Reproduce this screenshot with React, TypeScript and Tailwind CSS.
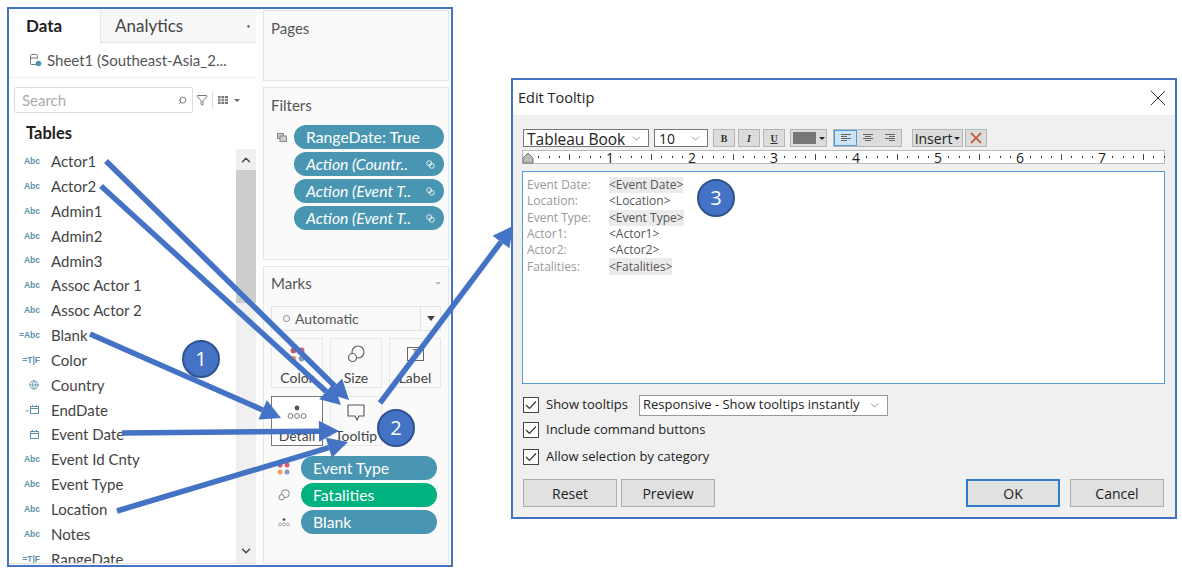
import { ChevronDown, ChevronUp, Globe, Search, Funnel } from "lucide-react";

const fields = [
  ["abc", "Actor1"],
  ["abc", "Actor2"],
  ["abc", "Admin1"],
  ["abc", "Admin2"],
  ["abc", "Admin3"],
  ["abc", "Assoc Actor 1"],
  ["abc", "Assoc Actor 2"],
  ["=abc", "Blank"],
  ["tf", "Color"],
  ["globe", "Country"],
  ["=date", "EndDate"],
  ["date", "Event Date"],
  ["abc", "Event Id Cnty"],
  ["abc", "Event Type"],
  ["abc", "Location"],
  ["abc", "Notes"],
  ["tf", "RangeDate"],
];

const tooltipLines = [
  ["Event Date:", "<Event Date>", true],
  ["Location:", "<Location>", false],
  ["Event Type:", "<Event Type>", true],
  ["Actor1:", "<Actor1>", false],
  ["Actor2:", "<Actor2>", false],
  ["Fatalities:", "<Fatalities>", true],
] as const;

const CalendarIcon = () => (
  <svg width="11" height="11" viewBox="0 0 11 11" fill="none" stroke="#5b93ab" strokeWidth="1">
    <rect x="1.5" y="2.5" width="8" height="7" />
    <path d="M1.5 4.5h8M3.5 1v2M7.5 1v2" />
  </svg>
);

const FieldIcon = ({ kind }: { kind: string }) => {
  if (kind === "globe") return <Globe size={10} color="#5b93ab" className="mr-[1px]" />;
  if (kind === "date") return <CalendarIcon />;
  if (kind === "=date")
    return (
      <span className="flex items-center text-[7px] text-[#5b93ab]">
        =<CalendarIcon />
      </span>
    );
  const text = kind === "abc" ? "Abc" : kind === "=abc" ? "=Abc" : "=T|F";
  return <span className="font-['Liberation_Sans',sans-serif] text-[8.5px] font-bold text-[#5b93ab]">{text}</span>;
};

const LinkIcon = () => (
  <svg width="9" height="9" viewBox="0 0 10 10" fill="none" stroke="#fff" strokeWidth="0.9" className="shrink-0">
    <circle cx="3.6" cy="3.6" r="2.8" />
    <circle cx="6.4" cy="6.4" r="2.8" />
  </svg>
);

const Pill = ({ label, italic, color = "bg-[#4996b2]", link }: { label: string; italic?: boolean; color?: string; link?: boolean }) => (
  <div className={`flex h-6 items-center justify-between rounded-full pl-3 pr-[9px] text-[15.75px] text-white ${color} ${italic ? "italic" : ""}`}>
    <span className="whitespace-nowrap">{label}</span>
    {link && <LinkIcon />}
  </div>
);

const DetailIcon = ({ small }: { small?: boolean }) => (
  <svg width={small ? 12 : 20} height={small ? 12 : 18} viewBox="0 0 20 18" fill="none" stroke="#777" strokeWidth="1">
    <circle cx="10" cy="5" r="2.4" fill="#555" stroke="none" />
    <circle cx="3.5" cy="13" r="2.4" />
    <circle cx="10" cy="13" r="2.4" />
    <circle cx="16.5" cy="13" r="2.4" />
  </svg>
);

const SizeIcon = ({ small }: { small?: boolean }) => (
  <svg width={small ? 12 : 18} height={small ? 14 : 18} viewBox="0 0 18 18" fill="none" stroke="#666" strokeWidth="1.2">
    <circle cx="11" cy="7" r="6" />
    <circle cx="5.5" cy="12.5" r="4" fill="#fafafa" />
  </svg>
);

const ColorDots = ({ s = 5 }: { s?: number }) => (
  <svg width={s * 2 + 3} height={s * 2 + 3} viewBox="0 0 13 13">
    <circle cx="3" cy="3" r="2.5" fill="#c9566f" />
    <circle cx="10" cy="3" r="2.5" fill="#e2576f" />
    <circle cx="3" cy="10" r="2.5" fill="#f0a060" />
    <circle cx="10" cy="10" r="2.5" fill="#8a9cb8" />
  </svg>
);

const MarkButton = ({ label, icon, active }: { label: string; icon: React.ReactNode; active?: boolean }) => (
  <div className={`flex h-[50px] flex-col items-center justify-between border pt-[5px] text-[14px] text-[#444] ${active ? "border-[#777] bg-white" : "border-[#e8e8e8] bg-[#fafafa]"}`}>
    <div className="flex h-5 items-center">{icon}</div>
    <span className="leading-[19px]">{label}</span>
  </div>
);

const Card = ({ title, caret, className, children }: { title: string; caret?: boolean; className: string; children?: React.ReactNode }) => (
  <div className={`border border-[#e6e6e6] bg-[#fafafa] px-[7px] ${className}`}>
    <div className="flex items-center justify-between text-[15px] leading-5 text-[#555]">
      {title}
      {caret && <div className="h-0 w-0 border-x-[3px] border-t-[3px] border-x-transparent border-t-[#bbb]" />}
    </div>
    {children}
  </div>
);

const Ruler = () => {
  const ticks = [];
  for (let i = 1; i < 63; i++) {
    const x = Math.round(6 + i * 10.25);
    if (i % 8 === 0) continue;
    if (i % 4 === 0) ticks.push(<rect key={i} x={x} y="4" width="1" height="6" fill="#444" />);
    else ticks.push(<rect key={i} x={x} y="6" width="1" height="2" fill="#333" />);
  }
  return (
    <svg width="643" height="14" className="block bg-white">
      <rect x="0.5" y="0.5" width="642" height="13" fill="none" stroke="#bbb" />
      {ticks}
      {[1, 2, 3, 4, 5, 6, 7].map((n) => (
        <text key={n} x={6 + n * 82} y="12.5" textAnchor="middle" fontSize="14" fill="#222" fontFamily="Open Sans, sans-serif">
          {n}
        </text>
      ))}
      <path d="M1 13V8l5-5 5 5v5z" fill="#bbb" stroke="#777" />
    </svg>
  );
};

const ToolButton = ({ children, className = "" }: { children: React.ReactNode; className?: string }) => (
  <div className={`flex h-[18px] w-[22px] items-center justify-center border border-[#b5b5b5] bg-[#dcdcdc] ${className}`}>{children}</div>
);

const AlignIcon = ({ mode }: { mode: "l" | "c" | "r" }) => {
  const x = (w: number) => (mode === "l" ? 1 : mode === "c" ? (12 - w) / 2 : 11 - w);
  return (
    <svg width="12" height="10" viewBox="0 0 12 10" stroke="#666">
      <path d={`M${x(10)} 1.5h10M${x(6)} 3.5h6M${x(10)} 5.5h10M${x(6)} 7.5h6`} />
    </svg>
  );
};

const Check = ({ label, className = "" }: { label: string; className?: string }) => (
  <div className={`flex items-center ${className}`}>
    <div className="flex h-4 w-4 items-center justify-center border border-[#444] bg-white">
      <svg width="12" height="10" viewBox="0 0 12 10" fill="none" stroke="#333" strokeWidth="1.2">
        <path d="M1 5l3.5 3.5L11 1.5" />
      </svg>
    </div>
    <span className="ml-[7px] whitespace-nowrap text-[13px] text-[#222]">{label}</span>
  </div>
);

const DialogButton = ({ label, ok }: { label: string; ok?: boolean }) => (
  <div className={`flex h-7 w-[94px] items-center justify-center bg-[#e1e1e1] text-[14px] text-[#222] ${ok ? "border-2 border-[#2d7cc7]" : "border border-[#adadad]"}`}>{label}</div>
);

const Badge = ({ n, x, y }: { n: number; x: string; y: string }) => (
  <div className={`absolute flex h-[38px] w-[38px] items-center justify-center rounded-full border-2 border-[#2f528f] bg-[#4472c4] font-['Open_Sans',sans-serif] text-[20px] text-white ${x} ${y}`}>{n}</div>
);

const Arrow = ({ d }: { d: [number, number, number, number] }) => {
  const [x1, y1, x2, y2] = d;
  const a = Math.atan2(y2 - y1, x2 - x1);
  const bx = x2 - 20 * Math.cos(a);
  const by = y2 - 20 * Math.sin(a);
  const nx = 10.5 * Math.sin(a);
  const ny = 10.5 * Math.cos(a);
  return (
    <g>
      <line x1={x1} y1={y1} x2={bx} y2={by} stroke="#4472c4" strokeWidth="5.5" />
      <polygon points={`${x2},${y2} ${bx + nx},${by - ny} ${bx - nx},${by + ny}`} fill="#4472c4" />
    </g>
  );
};

export default function App() {
  return (
    <div className="relative flex h-[569px] w-[1182px] items-start overflow-hidden bg-white font-['Lato',sans-serif]">
      {/* Tableau side panes */}
      <div className="ml-[7px] mt-[7px] flex h-[560px] w-[446px] gap-[7px] border-2 border-[#4472c4] bg-[#fdfdfd] pb-[1px] pt-px">
        {/* Data pane */}
        <div className="flex w-[247px] shrink-0 flex-col overflow-hidden bg-white">
          <div className="flex h-[33px] shrink-0">
            <div className="flex w-[91px] items-center pb-[2px] pl-[17px] text-[17px] font-bold text-[#222]">Data</div>
            <div className="flex flex-1 items-center justify-between border-b border-l border-[#e6e6e6] bg-[#f7f7f7] pl-[14px] pr-[6px] text-[17px] text-[#444]">
              Analytics
              <span className="text-[5px] leading-none text-[#555]">●</span>
            </div>
          </div>
          <div className="flex h-[35px] shrink-0 items-center gap-[5px] border-b border-[#eee] pl-5 text-[15px] text-[#555]">
            <svg width="13" height="14" viewBox="0 0 13 14" fill="none" stroke="#777">
              <path d="M7 11.5H2.5a1 1 0 0 1-1-1v-8a1 1 0 0 1 1-1h5a1 1 0 0 1 1 1v3M1.5 5h7" />
              <circle cx="9.5" cy="10.5" r="2.8" fill="#4996b2" stroke="none" />
            </svg>
            Sheet1 (Southeast-Asia_2...
          </div>
          <div className="mt-[9px] flex h-[26px] shrink-0 items-center pl-[5px]">
            <div className="flex h-[26px] w-[179px] items-center justify-between rounded-[2px] border border-[#ddd] pl-[7px] pr-[5px] text-[15px] text-[#aaa]">
              Search
              <Search size={9} color="#555" className="-scale-x-100" />
            </div>
            <Funnel size={12} color="#777" className="ml-[3px]" />
            <div className="ml-[4px] h-[18px] w-px bg-[#ddd]" />
            <svg width="10" height="8" viewBox="0 0 10 8" fill="#777" className="ml-[5px]">
              <path d="M0 0h10v8H0z" />
              <path d="M3 0v8M6.5 0v8M0 2.7h10M0 5.3h10" stroke="#fff" strokeWidth="0.8" />
            </svg>
            <div className="ml-[6px] h-0 w-0 border-x-[3px] border-t-[3px] border-x-transparent border-t-[#666]" />
          </div>
          <div className="mt-[10px] h-[26px] shrink-0 pl-[17px] text-[16.5px] font-bold leading-[20px] text-[#222]">Tables</div>
          <div className="flex min-h-0 flex-1 border-b border-[#ddd]">
            <div className="min-w-0 flex-1 overflow-hidden">
              {fields.map(([kind, name]) => (
                <div key={name} className="flex h-[24.85px] items-center text-[15px] text-[#444]">
                  <div className="mr-[11px] flex w-[31px] shrink-0 justify-end">
                    <FieldIcon kind={kind} />
                  </div>
                  {name}
                </div>
              ))}
            </div>
            <div className="flex w-5 shrink-0 flex-col bg-[#f0f0f0]">
              <div className="flex h-[21px] items-center justify-center">
                <ChevronUp size={14} strokeWidth={2.5} color="#444" />
              </div>
              <div className="h-[133px] bg-[#cdcdcd]" />
              <div className="mt-auto flex h-[24px] items-center justify-center">
                <ChevronDown size={14} strokeWidth={2.5} color="#444" />
              </div>
            </div>
          </div>
        </div>

        {/* Cards column */}
        <div className="flex w-[186px] shrink-0 flex-col gap-[6px]">
          <Card title="Pages" className="h-[71px] pt-[7px]" />
          <Card title="Filters" className="h-[173px] pt-[7px]">
            <div className="relative -mr-[3px] mt-[10px] flex flex-col gap-[3px] pl-[23px]">
              <svg width="10" height="9" viewBox="0 0 10 9" fill="#ccc" stroke="#888" className="absolute left-[6px] top-[8px]">
                <rect x="0.5" y="0.5" width="6" height="5" />
                <rect x="3" y="3" width="6.5" height="5.5" />
              </svg>
              <Pill label="RangeDate: True" />
              <Pill label="Action (Countr.." italic link />
              <Pill label="Action (Event T.." italic link />
              <Pill label="Action (Event T.." italic link />
            </div>
          </Card>
          <Card title="Marks" caret className="min-h-0 flex-1 pt-[6px]">
            <div className="mt-[13px] flex h-[25px] items-center justify-between border border-[#e4e4e4] bg-[#f9f9f9] pl-[11px] text-[14px] text-[#555]">
              <span className="flex items-center gap-[5px]">
                <span className="h-[7px] w-[7px] rounded-full border border-[#888]" />
                Automatic
              </span>
              <span className="flex h-full w-5 items-center justify-center border-l border-[#e4e4e4]">
                <span className="h-0 w-0 border-x-[4px] border-t-[5px] border-x-transparent border-t-[#444]" />
              </span>
            </div>
            <div className="mt-[7px] grid w-[170px] grid-cols-3 gap-x-[7px] gap-y-[8px]">
              <MarkButton label="Color" icon={<ColorDots s={6} />} />
              <MarkButton label="Size" icon={<SizeIcon />} />
              <MarkButton
                label="Label"
                icon={
                  <span className="flex h-[14px] w-[17px] items-start justify-center border border-[#666] text-[9px] leading-none text-[#666]">T</span>
                }
              />
              <MarkButton label="Detail" active icon={<DetailIcon />} />
              <MarkButton
                label="Tooltip"
                icon={
                  <svg width="18" height="17" viewBox="0 0 18 17" fill="none" stroke="#555" strokeWidth="1.1">
                    <path d="M1 1h16v11h-5l-2 4-2-4H1z" />
                  </svg>
                }
              />
            </div>
            <div className="mt-[10px] flex flex-col gap-[3px]">
              {[
                ["Event Type", "bg-[#4996b2]", <ColorDots key="c" />],
                ["Fatalities", "bg-[#00b27d]", <SizeIcon key="s" small />],
                ["Blank", "bg-[#4996b2]", <DetailIcon key="d" small />],
              ].map(([label, color, icon]) => (
                <div key={label as string} className="flex items-center">
                  <div className="flex w-[30px] justify-center pr-[5px]">{icon}</div>
                  <div className="w-[136px]">
                    <Pill label={label as string} color={color as string} />
                  </div>
                </div>
              ))}
            </div>
          </Card>
        </div>
      </div>

      {/* Edit Tooltip dialog */}
      <div className="ml-[58px] mt-[78px] flex h-[441px] w-[666px] flex-col border-2 border-[#4472c4] bg-[#f0f0f0] font-['Open_Sans',sans-serif]">
        <div className="flex h-[35px] shrink-0 items-center justify-between bg-white pl-[5px] pr-[9px] text-[14.5px] text-[#222]">
          Edit Tooltip
          <svg width="16" height="16" viewBox="0 0 16 16" stroke="#333" strokeWidth="1">
            <path d="M1 1l14 14M15 1L1 15" />
          </svg>
        </div>
        <div className="mt-[14px] flex h-[18px] shrink-0 items-center pl-[10px]">
          <div className="flex h-[18px] w-[126px] items-center justify-between border border-[#777] bg-white pl-[3px] pr-[5px] text-[15.5px] text-[#222]">
            <span className="mt-[3px]">Tableau Book</span>
            <ChevronDown size={13} strokeWidth={1} color="#444" />
          </div>
          <div className="ml-[5px] flex h-[18px] w-[54px] items-center justify-between border border-[#777] bg-white pl-[4px] pr-[5px] text-[14px] text-[#222]">
            10
            <ChevronDown size={13} strokeWidth={1} color="#444" />
          </div>
          <ToolButton className="ml-[5px] font-['Liberation_Serif',serif] text-[10px] font-bold text-[#333]">B</ToolButton>
          <ToolButton className="ml-[3px] font-['Liberation_Serif',serif] text-[10px] font-bold italic text-[#333]">I</ToolButton>
          <ToolButton className="ml-[3px] font-['Liberation_Serif',serif] text-[10px] font-bold text-[#333] underline">U</ToolButton>
          <div className="ml-[5px] flex h-[18px] w-[37px] items-center gap-[3px] border border-[#b5b5b5] bg-[#dcdcdc] pl-[2px]">
            <div className="h-3 w-[23px] bg-[#777]" />
            <div className="h-0 w-0 border-x-[3px] border-t-[3px] border-x-transparent border-t-[#222]" />
          </div>
          <div className="ml-[6px] flex h-[18px] border border-[#b5b5b5] bg-[#dcdcdc]">
            <div className="flex w-[23px] items-center justify-center border border-[#4a9be0] bg-[#cde4f7]">
              <AlignIcon mode="l" />
            </div>
            <div className="flex w-[22px] items-center justify-center">
              <AlignIcon mode="c" />
            </div>
            <div className="flex w-[22px] items-center justify-center">
              <AlignIcon mode="r" />
            </div>
          </div>
          <div className="ml-[10px] flex h-[18px] w-[51px] items-center justify-center gap-[2px] border border-[#b5b5b5] bg-[#dcdcdc] text-[14px] text-[#222]">
            Insert
            <span className="h-0 w-0 border-x-[3px] border-t-[3px] border-x-transparent border-t-[#222]" />
          </div>
          <ToolButton className="ml-[2px]">
            <svg width="12" height="12" viewBox="0 0 12 12" stroke="#c0604d" strokeWidth="1.8">
              <path d="M1 1l10 10M11 1L1 11" />
            </svg>
          </ToolButton>
        </div>
        <div className="ml-[9px] mt-[3px] shrink-0">
          <Ruler />
        </div>
        <div className="ml-[9px] mt-[7px] h-[213px] w-[643px] shrink-0 border border-[#5b9bd5] bg-white pl-1 pt-[5px] text-[12px]">
          {tooltipLines.map(([label, value, shaded]) => (
            <div key={label} className="flex h-[16.3px] items-center">
              <span className="w-[82px] shrink-0 text-[#999]">{label}</span>
              <span className={`flex h-full items-center text-[#555] ${shaded ? "bg-[#ebebeb]" : ""}`}>{value}</span>
            </div>
          ))}
        </div>
        <div className="ml-[10px] mt-[10px] flex h-[22px] shrink-0 items-center">
          <Check label="Show tooltips" />
          <div className="ml-[11px] flex h-[21px] w-[249px] items-center justify-between border border-[#999] bg-white pl-[3px] pr-[6px] text-[13px] text-[#222]">
            <span className="whitespace-nowrap">Responsive - Show tooltips instantly</span>
            <ChevronDown size={13} strokeWidth={1} color="#444" />
          </div>
        </div>
        <Check label="Include command buttons" className="ml-[10px] mt-[3px] h-[22px] shrink-0" />
        <Check label="Allow selection by category" className="ml-[10px] mt-[5px] h-[22px] shrink-0" />
        <div className="ml-[10px] mr-[11px] mt-[11px] flex shrink-0 items-center">
          <DialogButton label="Reset" />
          <div className="ml-[4px]">
            <DialogButton label="Preview" />
          </div>
          <div className="ml-auto">
            <DialogButton label="OK" ok />
          </div>
          <div className="ml-[10px]">
            <DialogButton label="Cancel" />
          </div>
        </div>
      </div>

      {/* Annotation arrows */}
      <svg width="1182" height="569" className="pointer-events-none absolute left-0 top-0">
        <Arrow d={[106, 161, 349, 400]} />
        <Arrow d={[101, 186, 341, 405]} />
        <Arrow d={[90, 334, 281, 418]} />
        <Arrow d={[122, 433, 339, 431]} />
        <Arrow d={[117, 511, 348, 442]} />
        <Arrow d={[380, 403, 513, 226]} />
      </svg>
      <Badge n={1} x="left-[182px]" y="top-[340px]" />
      <Badge n={2} x="left-[377px]" y="top-[409px]" />
      <Badge n={3} x="left-[697px]" y="top-[179px]" />
    </div>
  );
}
